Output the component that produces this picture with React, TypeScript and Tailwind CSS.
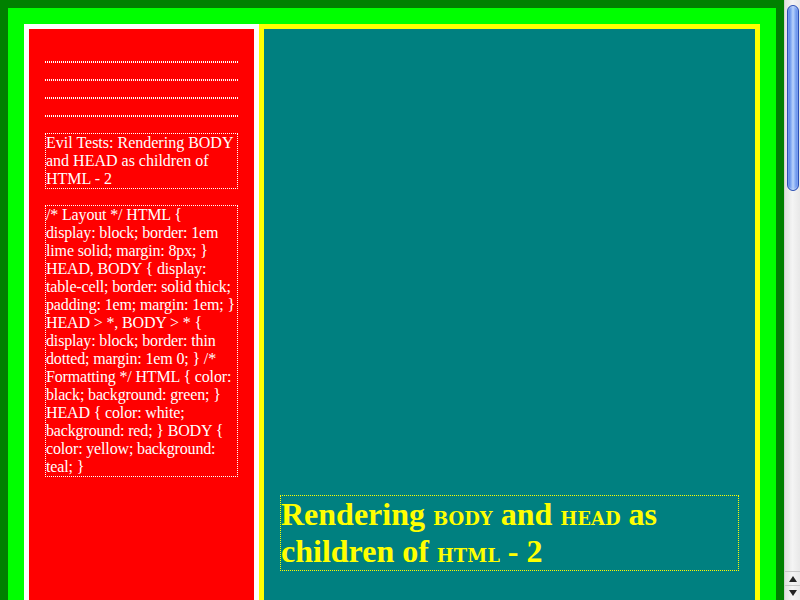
import React from "react";

const serif = { fontFamily: '"Liberation Serif", "Times New Roman", serif' };

function Empty() {
  return <div className="h-0 border-t border-b border-dotted border-white" />;
}

function Scrollbar() {
  return (
    <div className="w-[16px] h-[600px] shrink-0 flex flex-col bg-gradient-to-r from-[#e2e2e2] via-[#f4f4f4] to-[#e8e8e8] border-l border-[#d0d0d0]">
      <div className="flex-1 pt-[5px] px-[1px]">
        <div className="mx-auto w-[12px] h-[186px] rounded-[6px] border border-[#2a4fb4] bg-gradient-to-r from-[#3f6fe0] via-[#b8d2fb] to-[#4a7ae6] shadow-[inset_0_0_2px_rgba(255,255,255,0.8)]" />
      </div>
      <div className="h-[14px] flex items-center justify-center border-t border-[#c8c8c8]">
        <svg width="8" height="6" viewBox="0 0 8 6"><path d="M4 0 L8 6 L0 6 Z" fill="#222" /></svg>
      </div>
      <div className="h-[15px] flex items-center justify-center border-t border-[#c8c8c8]">
        <svg width="8" height="6" viewBox="0 0 8 6"><path d="M0 0 L8 0 L4 6 Z" fill="#222" /></svg>
      </div>
    </div>
  );
}

const cssLines = [
  "/* Layout */ HTML {",
  "display: block; border: 1em",
  "lime solid; margin: 8px; }",
  "HEAD, BODY { display:",
  "table-cell; border: solid thick;",
  "padding: 1em; margin: 1em; }",
  "HEAD > *, BODY > * {",
  "display: block; border: thin",
  "dotted; margin: 1em 0; } /*",
  "Formatting */ HTML { color:",
  "black; background: green; }",
  "HEAD { color: white;",
  "background: red; } BODY {",
  "color: yellow; background:",
  "teal; }",
];

export default function App() {
  const sc = { fontFamily: '"DejaVu Serif", serif', fontVariant: "small-caps" as const };
  return (
    <div className="flex w-[800px] h-[600px] overflow-hidden">
      <div className="w-[784px] h-[600px] shrink-0 bg-[#008000] pt-[8px] px-[8px]">
        <div className="flex h-[800px] border-[16px] border-b-0 border-[#00ff00]">
          <div className="w-[235px] shrink-0 border-[5px] border-white bg-[#ff0000] px-4 pt-8 text-white text-[16px] leading-[18px]" style={serif}>
            <div className="flex flex-col gap-4">
              <Empty />
              <Empty />
              <Empty />
              <Empty />
              <div className="border border-dotted border-white">
                Evil Tests: Rendering BODY and HEAD as children of HTML - 2
              </div>
              <div className="border border-dotted border-white whitespace-nowrap tracking-[-0.15px]">
                {cssLines.map((l, i) => (
                  <div key={i}>{l}</div>
                ))}
              </div>
            </div>
          </div>
          <div className="flex-1 border-[5px] border-[#ffff00] bg-[#008080] px-4 pt-[466px]">
            <h1 className="border border-dotted border-[#ffff00] text-[#ffff00] text-[32px] leading-[37px] font-bold" style={serif}>
              Rendering <span className="text-[25px] leading-[20px]" style={sc}>body</span> and{" "}
              <span className="text-[25px] leading-[20px]" style={sc}>head</span> as children of{" "}
              <span className="text-[25px] leading-[20px]" style={sc}>html</span> - 2
            </h1>
          </div>
        </div>
      </div>
      <Scrollbar />
    </div>
  );
}
